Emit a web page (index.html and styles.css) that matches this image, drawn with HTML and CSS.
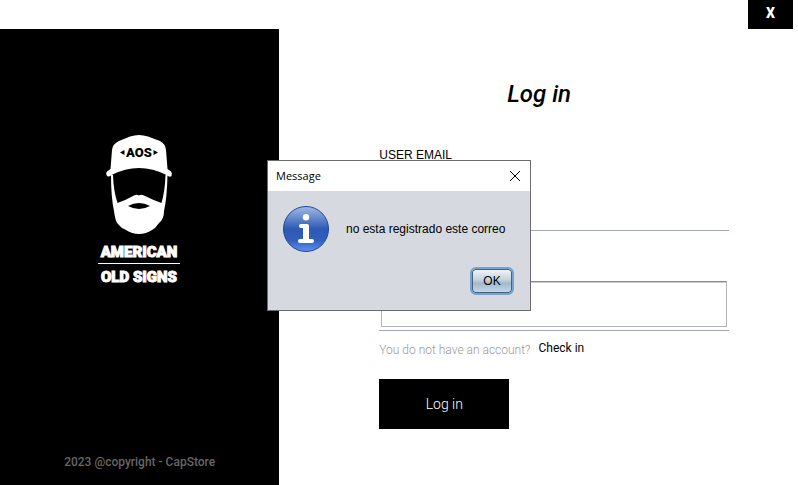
FILE: index.html
```html
<!DOCTYPE html>
<html lang="en">
<head>
<meta charset="utf-8">
<meta name="viewport" content="width=device-width, initial-scale=1">
<title>Log in</title>
<link rel="stylesheet" href="styles.css">
</head>
<body>
<header class="topbar">
  <button class="close-app" type="button">X</button>
</header>
<main class="layout">
  <aside class="brand">
    <svg class="logo" viewBox="0 0 90 160" role="img" aria-label="American Old Signs">
      <path class="ink" d="M8.500 42 Q7.500 40 9 38.500 L12.500 36 L14 17 Q14.500 11 21 8 L32 3.500 Q41 .500 50 3.500 L62 8 Q67.500 11 68 17 L69.500 36 L73 38.500 Q74.500 40 73.500 43 Q72 45 68.500 42 Q41 28 13.500 42 Q10 45 8.500 42 Z"/>
      <path class="ink" d="M15 42 Q15.500 58 19.500 70 Q28 67 36 62.500 Q39 61 41 62.500 Q43 61 46 62.500 Q55 67 63.500 70 Q67 58 67.500 42 L69.500 42 Q69 65 66 78 Q66 86 61 90 L57 95 L54 97 Q48 101 41 101 Q34 101 28 97 L24 95 L19 90 Q17 86 16 78 Q13 64 13 42 Z"/>
      <path d="M30 73 Q41 67 52 73 Q41 79 30 73 Z"/>
      <path d="M22 19.500 L26.500 17 V22 Z M60 19.500 L55.500 17 V22 Z"/>
      <text class="cap-text" x="41" y="24" text-anchor="middle">AOS</text>
      <text class="logo-text ink" x="41" y="124" text-anchor="middle">AMERICAN</text>
      <path class="rule" d="M0 130.500 H82"/>
      <text class="logo-text ink" x="41" y="149" text-anchor="middle">OLD SIGNS</text>
    </svg>
    <p class="copyright">2023 @copyright - CapStore</p>
  </aside>
  <form class="login">
    <h1 class="title">Log in</h1>
    <label class="label" for="email">USER EMAIL</label>
    <input class="email" id="email" type="email">
    <div class="password-row">
      <input class="password" type="password" aria-label="Password">
    </div>
    <p class="signup"><span>You do not have an account?</span><a class="check-in" href="#">Check in</a></p>
    <button class="submit" type="submit">Log in</button>
  </form>
</main>
<dialog class="message" open aria-labelledby="message-title">
  <div class="message-head">
    <h2 class="message-title" id="message-title">Message</h2>
    <button class="dismiss" type="button" aria-label="Close">
      <svg width="12" height="12" viewBox="0 0 12 12"><path d="M1 1 L11 11 M11 1 L1 11"/></svg>
    </button>
  </div>
  <div class="message-body">
    <svg class="info" width="48" height="48" viewBox="0 0 48 48" aria-hidden="true">
      <defs>
        <linearGradient id="ball" x1="0" y1="0" x2="0" y2="1">
          <stop offset="0" stop-color="#a3b9e6"/>
          <stop offset=".3" stop-color="#5b80c9"/>
          <stop offset=".5" stop-color="#2d5ab3"/>
          <stop offset=".75" stop-color="#315fba"/>
          <stop offset="1" stop-color="#5d93f3"/>
        </linearGradient>
      </defs>
      <circle cx="24" cy="24" r="22.500" fill="url(#ball)" stroke="#1f4799"/>
      <circle cx="24" cy="12.200" r="3.200" fill="#fff"/>
      <path d="M19 19 H25 Q27 19 27 21 V34 H30 Q32 34 32 36 Q32 38 30 38 H18 Q16 38 16 36 Q16 34 18 34 H21 V23 H19 Q17 23 17 21 Q17 19 19 19 Z" fill="#fff"/>
    </svg>
    <p class="message-text">no esta registrado este correo</p>
    <button class="ok" type="button">OK</button>
  </div>
</dialog>
</body>
</html>
```

FILE: styles.css
```css
* {
  box-sizing: border-box;
}

body {
  margin: 0;
  min-height: 100vh;
  display: flex;
  flex-direction: column;
  position: relative;
  background: #fff;
  color: #000;
  font: 12px/16px Roboto, sans-serif;
}

h1, h2, p {
  margin: 0;
}

button {
  padding: 0;
  border: 0;
  font: inherit;
}

.topbar {
  display: flex;
  justify-content: flex-end;
  padding-right: 5px;
}

.close-app {
  width: 45px;
  height: 29px;
  padding-bottom: 4px;
  background: #000;
  color: #fff;
  font-size: 14px;
  font-weight: 900;
}

.layout {
  flex: 1;
  display: grid;
  grid-template-columns: 35% 1fr;
}

.brand {
  display: flex;
  flex-direction: column;
  align-items: center;
  justify-content: space-between;
  padding: 104px 0 15px;
  background: #000;
}

.logo {
  width: 90px;
  height: 160px;
  margin-left: 6px;
}

.ink {
  fill: #fff;
}

.rule {
  stroke: #fff;
}

.logo-text {
  font: 900 15px Roboto, sans-serif;
  stroke: #fff;
  stroke-width: 1px;
}

.cap-text {
  font: 900 13px Roboto, sans-serif;
}

.copyright {
  color: #666;
  font-weight: 500;
}

.login {
  display: flex;
  flex-direction: column;
  align-items: stretch;
  padding: 49px 69px 56px 100px;
}

.title {
  margin-bottom: 37px;
  padding-right: 30px;
  font-size: 24px;
  line-height: 32px;
  font-weight: 500;
  font-style: italic;
  text-align: center;
}

.label {
  font-family: "Liberation Sans", sans-serif;
}

.email {
  height: 68px;
  padding: 0;
  border: 0;
  border-bottom: 1px solid #a2a6ae;
}

.password-row {
  margin-top: 50px;
  padding: 0 2px 3px;
  border-bottom: 1px solid #a2a6ae;
}

.password {
  display: block;
  width: 100%;
  height: 46px;
  border: 1px solid #b5b5b8;
  border-top-color: #8b8b8f;
  box-shadow: inset 0 1px #ccc;
}

.signup {
  display: flex;
  gap: 8px;
  margin: 10px 0 20px;
  color: #999;
  font-weight: 300;
  line-height: 18px;
}

.check-in {
  color: #000;
  font-weight: 400;
  line-height: 14px;
  text-decoration: none;
}

.submit {
  width: 130px;
  height: 50px;
  background: #000;
  color: #fff;
  font-size: 14px;
  font-weight: 300;
}

.message {
  position: absolute;
  top: 160px;
  left: 50%;
  width: 264px;
  margin: 0;
  padding: 0;
  transform: translateX(-50%);
  border: 1px solid #6c6c6e;
  background: #d6d9e0;
  color: #000;
}

.message-head {
  display: flex;
  align-items: center;
  justify-content: space-between;
  height: 30px;
  padding: 0 9px 0 8px;
  background: #fff;
}

.message-title {
  font: 11px/16px "Open Sans", sans-serif;
}

.dismiss {
  display: flex;
  background: none;
}

.dismiss path {
  stroke: #000;
  fill: none;
}

.message-body {
  display: grid;
  grid-template-columns: 48px 1fr;
  column-gap: 16px;
  row-gap: 14px;
  align-items: center;
  padding: 14px 16px 15px 14px;
  font-family: "Liberation Sans", sans-serif;
}

.info {
  display: block;
}

.message-text {
  white-space: nowrap;
}

.ok {
  grid-column: 2;
  justify-self: end;
  width: 44px;
  height: 28px;
  border: 2px solid #73a4d1;
  border-radius: 6px;
  background: linear-gradient(#f4f6f8, #c5d2dd 45%, #a3b8cc 60%, #c4dbef);
  box-shadow: inset 0 0 0 1px #4c5f73;
}
```
